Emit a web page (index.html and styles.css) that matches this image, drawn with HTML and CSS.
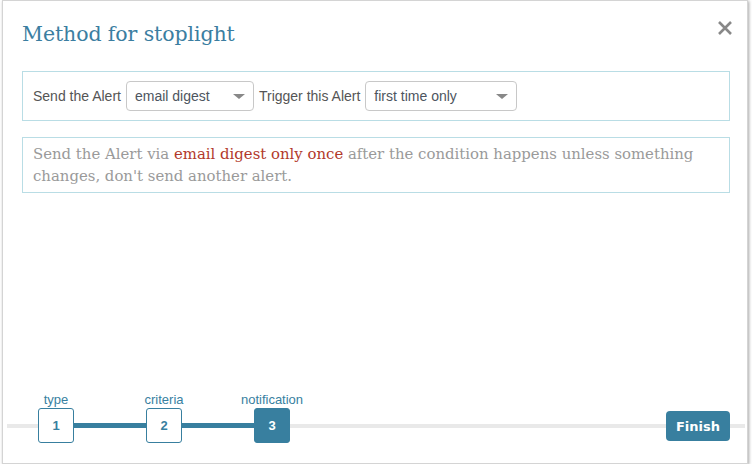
FILE: index.html
```html
<!DOCTYPE html>
<html>
<head>
<meta charset="utf-8">
<link rel="stylesheet" href="styles.css">
</head>
<body>
<div class="dialog">
  <div class="header">
    <h1 class="title">Method for stoplight</h1>
    <button class="close" aria-label="Close">
      <svg width="16" height="16" viewBox="0 0 16 16"><path d="M2 2L14 14M14 2L2 14" stroke="#888" stroke-width="2.6" stroke-linecap="butt" fill="none"/></svg>
    </button>
  </div>
  <div class="panel options">
    <span class="lbl">Send the Alert</span>
    <div class="select sel-method"><span>email digest</span><i class="caret"></i></div>
    <span class="lbl">Trigger this Alert</span>
    <div class="select sel-trigger"><span>first time only</span><i class="caret"></i></div>
  </div>
  <div class="panel summary">
    Send the Alert via <span class="hl">email digest only once</span> after the condition happens unless something changes, don't send another alert.
  </div>
  <div class="footer">
    <div class="steps">
      <div class="step-label s1">type</div>
      <div class="step-label s2">criteria</div>
      <div class="step-label s3">notification</div>
      <div class="step-box b1">1</div>
      <div class="conn c1"></div>
      <div class="step-box b2">2</div>
      <div class="conn c2"></div>
      <div class="step-box b3 active">3</div>
    </div>
    <button class="finish">Finish</button>
  </div>
</div>
</body>
</html>
```
FILE: styles.css
```css
html, body {
  margin: 0;
  padding: 0;
  background: #fff;
}
.dialog {
  box-sizing: border-box;
  margin-left: 2px;
  width: 746px;
  height: 464px;
  border: 1px solid #d4d4d4;
  box-shadow: 1px 1px 3px rgba(0,0,0,0.35);
  display: flex;
  flex-direction: column;
  padding: 0 17px 20px 19px;
  background: #fff;
}
.header {
  display: flex;
  justify-content: space-between;
  align-items: flex-start;
  height: 70px;
}
.title {
  margin: 19px 0 0 0;
  font-family: "DejaVu Serif", serif;
  font-weight: normal;
  font-size: 20.5px;
  line-height: 28px;
  color: #3b7ea1;
  letter-spacing: -0.1px;
}
.close {
  margin: 19px -3px 0 0;
  padding: 0;
  border: 0;
  background: none;
  width: 16px;
  height: 16px;
  display: block;
}
.close svg { display: block; }
.panel {
  border: 1px solid #b9dde5;
}
.options {
  display: flex;
  align-items: center;
  gap: 5px;
  padding: 9px 10px;
  font-family: "Liberation Sans", Arial, sans-serif;
  font-size: 14px;
  color: #555;
}
.select {
  box-sizing: border-box;
  height: 30px;
  border: 1px solid #c8c8c8;
  border-radius: 4px;
  display: flex;
  align-items: center;
  justify-content: space-between;
  padding: 0 8px 0 8px;
  color: #4d5560;
}
.sel-method { width: 128px; }
.sel-trigger { width: 152px; }
.caret {
  width: 0;
  height: 0;
  border-left: 6px solid transparent;
  border-right: 6px solid transparent;
  border-top: 5px solid #888;
  margin-top: 1px;
}
.summary {
  margin-top: 16px;
  padding: 5px 10px;
  font-family: "DejaVu Serif", serif;
  font-size: 14.9px;
  line-height: 22px;
  color: #9a9a9a;
}
.hl { color: #b2392b; }
.footer {
  margin-top: auto;
  margin-left: -15px;
  margin-right: -15px;
  padding: 0 15px 0 31px;
  display: flex;
  justify-content: space-between;
  align-items: flex-end;
  background: linear-gradient(#e9e9e9, #e9e9e9) no-repeat 0 calc(100% - 15px) / 100% 4px;
}
.steps {
  display: grid;
  grid-template-columns: 36px 72px 36px 72px 36px;
  grid-template-rows: 15px 35px;
  row-gap: 1px;
  font-family: "Liberation Sans", Arial, sans-serif;
  color: #387f9f;
}
.step-label {
  grid-row: 1;
  justify-self: center;
  white-space: nowrap;
  font-size: 13px;
  line-height: 15px;
}
.s1 { grid-column: 1; }
.s2 { grid-column: 3; }
.s3 { grid-column: 5; }
.step-box {
  grid-row: 2;
  box-sizing: border-box;
  border: 1px solid #387f9f;
  border-radius: 3px;
  background: #fff;
  display: flex;
  align-items: center;
  justify-content: center;
  font-weight: bold;
  font-size: 13px;
}
.b1 { grid-column: 1; }
.b2 { grid-column: 3; }
.b3 { grid-column: 5; }
.step-box.active {
  background: #387f9f;
  color: #fff;
}
.conn {
  grid-row: 2;
  align-self: center;
  height: 5px;
  background: #387f9f;
}
.c1 { grid-column: 2; }
.c2 { grid-column: 4; }
.finish {
  box-sizing: border-box;
  width: 64px;
  height: 30px;
  margin-bottom: 2px;
  border: 0;
  border-radius: 4px;
  background: #387f9f;
  color: #fff;
  font-family: "DejaVu Sans", Verdana, sans-serif;
  font-weight: bold;
  font-size: 13px;
  padding: 0;
}
```
